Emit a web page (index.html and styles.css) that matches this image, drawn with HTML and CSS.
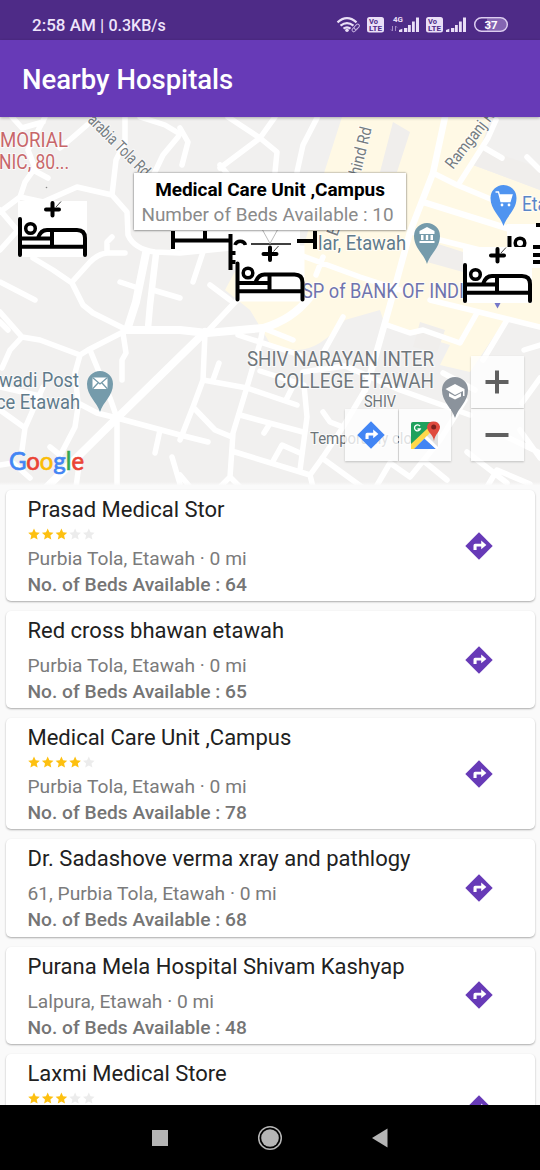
FILE: index.html
```html
<!DOCTYPE html>
<html lang="en">
<head>
<meta charset="utf-8">
<title>Nearby Hospitals</title>
<link rel="stylesheet" href="styles.css">
</head>
<body>
<svg class="defs" width="0" height="0" aria-hidden="true">
  <defs>
    <g id="bed">
      <path class="bed-back" d="M18 201H87V257H18Z"/>
      <path class="bed-line" d="M20 219V255M20 246.7H85M20 238.5H52M52 230V246M38 238C40 232 43 230 47 230H77Q85 230 85 238V255"/>
      <circle class="bed-head" cx="30.5" cy="228.5" r="4.8"/>
      <path class="bed-line" d="M46 209.5H59M52.5 203V215.5"/>
      <path class="bed-tick" d="M61 201.5L56 207"/>
    </g>
    <path id="pin" d="M0 29C-3 19-13 13-13 1A13 13 0 0 1 13 1C13 13 3 19 0 29Z"/>
    <path id="star" d="M6 .4 7.7 4.3 11.8 4.7 8.7 7.4 9.6 11.6 6 9.4 2.4 11.6 3.3 7.4 .2 4.7 4.3 4.3Z"/>
    <g id="directions">
      <path d="M14 .3 27.7 14 14 27.700.3 14Z"/>
      <path class="arrow" d="M8.5 18V13.400Q8.5 11.700 10.200 11.700H16.200V8.600L21.400 13 16.200 17.200V14.600H11.600V18Z"/>
    </g>
  </defs>
</svg>

<header class="status">
  <span class="clock">2:58 AM <span class="thin">|</span> <span class="rate">0.3KB/s</span></span>
  <svg class="status-icons" width="174" height="20" viewBox="336 15 174 20">
    <g class="wifi"><path d="M337.5 22.3Q347 14 356.5 22.3M340.5 25.6Q347 20.5 353.5 25.6M343.5 28.7Q347 26 350.5 28.7"/></g>
    <circle class="fill" cx="347" cy="30.3" r="1.8"/>
    <g class="link"><rect x="351.5" y="27.5" width="6" height="3.4" rx="1.7" transform="rotate(-45 354.5 29)"/><rect x="354" y="25" width="6" height="3.4" rx="1.7" transform="rotate(-45 357 27)"/></g>
    <rect class="fill" x="367" y="17" width="17" height="15.5" rx="2.5"/>
    <text class="volte" x="369" y="24">Vo</text><text class="volte" x="369" y="31.3" textLength="13" lengthAdjust="spacingAndGlyphs">LTE</text>
    <text class="net" x="393" y="22" textLength="10" lengthAdjust="spacingAndGlyphs">4G</text>
    <path class="arrows" d="M392.5 26V31M391 29.5 392.5 31M395.5 31V26M397 27.5 395.5 26"/>
    <path class="fill" d="M399 32V30L402.3 28.8V32ZM404 28H407.3V32H404ZM408 25H410.8V32H408ZM412 21.5H414.8V32H412ZM416 17.5H419V32H416Z"/>
    <rect class="fill" x="426" y="17" width="17" height="15.5" rx="2.5"/>
    <text class="volte" x="428" y="24">Vo</text><text class="volte" x="428" y="31.3" textLength="13" lengthAdjust="spacingAndGlyphs">LTE</text>
    <path class="fill" d="M446 32V30L449.3 28.8V32ZM451 28H454.3V32H451ZM455 25H457.8V32H455ZM459 21.5H461.8V32H459ZM463 17.5H466V32H463Z"/>
    <path class="charge" d="M487 18.5H501A6 6 0 0 1 501 30.5H487Z"/>
    <rect class="battery" x="474.7" y="17.7" width="32.6" height="13.6" rx="6.8"/>
    <text class="percent" x="484.5" y="28.7">37</text>
  </svg>
</header>

<div class="appbar"><h1>Nearby Hospitals</h1></div>

<main class="content">
<section class="map">
  <svg class="map-canvas" width="540" height="370" viewBox="0 117 540 370">
    <rect class="land" y="117" width="540" height="370"/>
    <path class="zone" d="M342 117H490L485 135 473 165 540 190V325L505 320 470 372 440 365 450 345 385 325 380 310 345 320Q320 350 297 350L272 347 262 330 250 310 225 290 240 262 300 260 325 170Z"/>
    <path class="block" d="M393 122 410 132 397 172 380 172ZM432 242 463 252V272L427 262ZM420 322 445 330 437 353 413 347ZM482 148 540 168V190L473 165Z"/>
    <g class="roads">
      <path d="M45 117 28 150 35 168 25 182 20 197M12 117 22 128 43 122M60 148 72 138 87 125M33 170 48 178M125 117V142L116 160 112 195M180 134 165 125 140 117M178 137 163 155 152 178M0 212 20 197 43 202 77 187 112 195 127 212 128 235Q134 249 155 252L180 253 230 248M0 250 18 230M0 210 17 230"/>
      <path d="M33 258 53 270 72 283 83 305 93 313 127 330M72 282 90 262Q98 254 107 253H125M107 252V242L112 237M0 282 35 300M120 282 135 287M153 290 180 298M203 252 193 282M210 285 230 300"/>
      <path d="M0 312 22 337 40 340 80 355 88 350 127 330M22 337 10 350 2 368M80 355 75 373 78 403 97 413 117 418M90 350 97 367 110 398 117 418M123 333 126 353 122 360V380M0 322 8 330M117 418 180 435 208 442M117 418V487M160 430 155 453M172 457 180 484M78 407 75 427 62 452M50 447 60 455M0 410 25 428 22 450M43 387 25 428M0 387 40 396M0 465 13 463 30 478M79 465 76 487"/>
      <path d="M207 332 237 300M205 333 203 380 193 407 180 440M263 328 260 343 247 387 233 433 230 477 240 487M230 477 220 487M180 475 190 487M203 380 247 388 297 405M213 380 219 363M263 328 293 340M238 335 300 355M193 407 215 430 232 437M240 415 303 432M269 425 264 433M260 371 304 385 307 417 300 470M286 400 292 388M235 452 310 475 313 487M272 463 282 445 300 453M310 475 323 457 343 427 365 390M322 458 362 487M323 412 330 422 343 427M343 317 323 353M303 372 345 366 400 390 470 415"/>
      <path d="M228 117 260 138 277 152 275 172M275 117 260 138 220 168M220 165 229 176M317 118 303 145 297 172M180 128 188 142 182 165M300 255 360 277 400 290M323 257 316 275"/>
      <path d="M433 173 457 185 500 203M460 182 488 138 496 120M483 147 502 158M527 157 540 170M412 232 440 240 480 250M387 325 410 333 423 330 460 343 477 313M430 300 540 327M507 320 483 360M443 373 475 390M467 452 507 483M376 487 390 463 410 477 440 440 465 400M425 462 447 480M487 487 497 470 530 484M520 430 540 458M522 403 540 378M507 437 540 453M524 350 540 345"/>
      <path class="main" d="M180 330 207 333 263 328Q292 320 310 297M127 330H180M205 332 117 418 47 487M146 253 136 302 127 330"/>
      <path class="avenue" d="M156 254 150 305 148 328M445 117 433 173 410 232 390 305 373 365 365 390M423 202 503 227 540 238"/>
    </g>

    <text class="road-name" transform="translate(87 121) rotate(45)" textLength="80" lengthAdjust="spacingAndGlyphs">arabia Tola Rd</text>
    <text class="road-name" transform="translate(360 176) rotate(-76)" textLength="49" lengthAdjust="spacingAndGlyphs">hind Rd</text>
    <text class="road-name" transform="translate(453 170) rotate(-52)" textLength="76" lengthAdjust="spacingAndGlyphs">Ramganj Rd</text>
    <text class="road-name" transform="translate(337 237) rotate(-70)">E</text>
    <g class="clinic"><text x="0" y="147" textLength="68" lengthAdjust="spacingAndGlyphs">MORIAL</text><text x="-1" y="169" textLength="70" lengthAdjust="spacingAndGlyphs">NIC, 80...</text></g>
    <g class="place"><text x="-1" y="387" textLength="80" lengthAdjust="spacingAndGlyphs">wadi Post</text><text x="-4" y="409" textLength="84" lengthAdjust="spacingAndGlyphs">ce Etawah</text></g>
    <text class="place" x="318" y="250" textLength="88" lengthAdjust="spacingAndGlyphs">lar, Etawah</text>
    <text class="bank" x="302" y="298" textLength="162" lengthAdjust="spacingAndGlyphs">SP of BANK OF INDI</text>
    <text class="shop" x="522" y="211" textLength="25" lengthAdjust="spacingAndGlyphs">Eta</text>
    <g class="school"><text x="247" y="366" textLength="187" lengthAdjust="spacingAndGlyphs">SHIV NARAYAN INTER</text><text x="274" y="388" textLength="160" lengthAdjust="spacingAndGlyphs">COLLEGE ETAWAH</text></g>
    <text class="note" x="364" y="407" textLength="32" lengthAdjust="spacingAndGlyphs">SHIV</text>
    <text class="note" x="310" y="444" textLength="126" lengthAdjust="spacingAndGlyphs">Temporarily closed</text>

    <g class="pin teal"><use href="#pin" x="100" y="383"/><rect class="glyph" x="92.5" y="377.5" width="15" height="11.5"/><path class="glyph-line" d="M92.5 377.5 100 384 107.5 377.5M92.5 389 98 383M107.5 389 102 383"/></g>
    <g class="pin teal"><use href="#pin" x="427" y="235"/><path class="glyph" d="M419.5 234V231L427 227 434.5 231V234ZM421 235H423.5V240H421ZM425.8 235H428.2V240H425.8ZM430.5 235H433V240H430.5ZM419.5 241H434.5V243H419.5Z"/></g>
    <g class="pin blue"><use href="#pin" x="503.5" y="197"/><path class="cart" d="M495.5 192H498.5L501 201.5H510L512 195H499.5"/><path class="glyph" d="M499.5 195H512L510 201H501Z"/><circle class="glyph" cx="502" cy="205" r="1.4"/><circle class="glyph" cx="509" cy="205" r="1.4"/></g>
    <g class="pin gray"><use href="#pin" x="455" y="389"/><path class="glyph" d="M445.5 389 455 384 464.5 389V396H463V391L455 395ZM449 393V396.5L455 399.5 461 396.5V393L455 396.2Z"/></g>
    <path class="bank-dot" d="M494.5 303H500.5L497.5 308.5Z"/>

    <path class="bed-back" d="M171 228H230V250H171ZM230 230H300V271H235ZM507 224H540V268H507Z"/>
    <path class="bed-line square" d="M173 231V249M173 240.5H231M205 231V240M230.5 234V270M232 262H236M232 253H236M297 241H316M315 231V249"/>
    <path class="bed-head" d="M235 245A5.5 5.5 0 0 1 245.5 245"/>
    <path class="bed-tick strong" d="M251 244H291"/>
    <path class="bed-line square" d="M509.5 236V247M536 225H540M533 247H540M533 255H540M533 262H540"/>
    <circle class="bed-head" cx="520" cy="243" r="4.8"/>
    <use href="#bed"/>
    <use href="#bed" x="217.5" y="44.5"/>
    <use href="#bed" x="445" y="46"/>
    <circle class="speck" cx="46.5" cy="187.5" r=".8"/>

    <text class="google" x="9" y="470" textLength="75" lengthAdjust="spacingAndGlyphs"><tspan class="g-blue">G</tspan><tspan class="g-red">o</tspan><tspan class="g-yellow">o</tspan><tspan class="g-blue">g</tspan><tspan class="g-green">l</tspan><tspan class="g-red">e</tspan></text>
    <path class="callout-tip" d="M262 229 270 243.5 278 229Z"/>
  </svg>

  <div class="callout">
    <strong>Medical Care Unit ,Campus</strong>
    <span>Number of Beds Available : 10</span>
  </div>

  <div class="map-tools">
    <span class="tool"><svg class="dir-blue" width="28" height="28" viewBox="0 0 28 28"><use href="#directions"/></svg></span>
    <span class="tool"><svg width="30" height="30" viewBox="0 0 30 30">
      <rect x="1" y="2" width="27" height="27" rx="2" fill="#e0e0e0"/>
      <path d="M3 2H22L20 10 1 29V4Q1 2 3 2Z" fill="#1fa15d"/>
      <path d="M1 24 19 7 23 10 4 29H1Z" fill="#ffd84b"/>
      <path d="M4 29 14.5 18.5 26 29Z" fill="#4285f4"/>
      <path d="M17 16 28 27V29H26L14.5 18.5Z" fill="#fff"/>
      <path d="M24 21C23 14 17 12 17 6.5A6.7 6.7 0 0 1 30 6.5C30 12 25 14 24 21Z" fill="#df4a3e"/>
      <circle cx="23.7" cy="7" r="2.5" fill="#7c221e"/>
      <path d="M10 6.2A3 3 0 1 0 10.3 9H7.5" fill="none" stroke="#fff" stroke-width="1.3"/>
    </svg></span>
  </div>

  <div class="zoom">
    <span class="zoom-btn"><svg width="24" height="24" viewBox="0 0 24 24"><path d="M.5 12H23.5M12 .5V23.5"/></svg></span>
    <span class="zoom-btn"><svg width="24" height="24" viewBox="0 0 24 24"><path d="M.5 12H23.5"/></svg></span>
  </div>
</section>

<section class="list">
  <article class="card">
    <div class="info"><h2>Prasad Medical Stor</h2>
      <svg class="stars" width="70" height="23" viewBox="0 0 70 23"><g class="on"><use href="#star" x="1" y="5"/><use href="#star" x="14.7" y="5"/><use href="#star" x="28.4" y="5"/></g><g class="off"><use href="#star" x="42.1" y="5"/><use href="#star" x="55.8" y="5"/></g></svg>
      <p>Purbia Tola, Etawah · 0 mi</p><p class="beds">No. of Beds Available : 64</p></div>
    <svg class="go" width="28" height="28" viewBox="0 0 28 28"><use href="#directions"/></svg>
  </article>
  <article class="card plain">
    <div class="info"><h2>Red cross bhawan etawah</h2><p>Purbia Tola, Etawah · 0 mi</p><p class="beds">No. of Beds Available : 65</p></div>
    <svg class="go" width="28" height="28" viewBox="0 0 28 28"><use href="#directions"/></svg>
  </article>
  <article class="card">
    <div class="info"><h2>Medical Care Unit ,Campus</h2>
      <svg class="stars" width="70" height="23" viewBox="0 0 70 23"><g class="on"><use href="#star" x="1" y="5"/><use href="#star" x="14.7" y="5"/><use href="#star" x="28.4" y="5"/><use href="#star" x="42.1" y="5"/></g><g class="off"><use href="#star" x="55.8" y="5"/></g></svg>
      <p>Purbia Tola, Etawah · 0 mi</p><p class="beds">No. of Beds Available : 78</p></div>
    <svg class="go" width="28" height="28" viewBox="0 0 28 28"><use href="#directions"/></svg>
  </article>
  <article class="card plain">
    <div class="info"><h2>Dr. Sadashove verma xray and pathlogy</h2><p>61, Purbia Tola, Etawah · 0 mi</p><p class="beds">No. of Beds Available : 68</p></div>
    <svg class="go" width="28" height="28" viewBox="0 0 28 28"><use href="#directions"/></svg>
  </article>
  <article class="card plain">
    <div class="info"><h2>Purana Mela Hospital Shivam Kashyap</h2><p>Lalpura, Etawah · 0 mi</p><p class="beds">No. of Beds Available : 48</p></div>
    <svg class="go" width="28" height="28" viewBox="0 0 28 28"><use href="#directions"/></svg>
  </article>
  <article class="card">
    <div class="info"><h2>Laxmi Medical Store</h2>
      <svg class="stars" width="70" height="23" viewBox="0 0 70 23"><g class="on"><use href="#star" x="1" y="5"/><use href="#star" x="14.7" y="5"/><use href="#star" x="28.4" y="5"/></g><g class="off"><use href="#star" x="42.1" y="5"/><use href="#star" x="55.8" y="5"/></g></svg>
    </div>
    <svg class="go" width="28" height="28" viewBox="0 0 28 28"><use href="#directions"/></svg>
  </article>
</section>
</main>

<nav class="navbar">
  <svg width="26" height="26" viewBox="0 0 26 26"><path class="key" d="M5 5H21V21H5Z"/></svg>
  <svg width="26" height="26" viewBox="0 0 26 26"><circle class="ring" cx="13" cy="13" r="11.3"/><circle class="key" cx="13" cy="13" r="8.8"/></svg>
  <svg width="26" height="26" viewBox="0 0 26 26"><path class="key" d="M5 13 20.5 3.5V22.5Z"/></svg>
</nav>
</body>
</html>
```
FILE: styles.css
```css
* { box-sizing: border-box; }
body {
  margin: 0;
  width: 540px;
  height: 1170px;
  display: flex;
  flex-direction: column;
  overflow: hidden;
  background: #fafafa;
  font-family: Roboto, sans-serif;
}
svg { display: block; flex: none; }
.defs { position: absolute; }

/* status bar */
.status {
  height: 40px;
  flex: none;
  display: flex;
  justify-content: space-between;
  padding: 15px 30px 0 32px;
  background: #4e2b87;
  color: #efe5fb;
}
.clock { font-size: 17px; line-height: 20px; font-weight: 500; white-space: nowrap; }
.thin { font-weight: 400; }
.rate { font-size: 16px; }
.fill { fill: #eadff7; }
.wifi path { fill: none; stroke: #eadff7; stroke-width: 2.2; }
.link rect { fill: #4e2b87; stroke: #c7b3e2; stroke-width: 1; }
.volte { font-size: 7.5px; font-weight: 700; fill: #4e2b87; }
.net { font-size: 8px; font-weight: 700; fill: #eadff7; }
.arrows { fill: none; stroke: #a58bc8; stroke-width: 1; }
.charge { fill: #8465b2; }
.battery { fill: none; stroke: #dccdf0; stroke-width: 1.5; }
.percent { font-size: 11.5px; font-weight: 700; fill: #fff; }

.appbar {
  height: 77px;
  flex: none;
  display: flex;
  align-items: center;
  padding: 2px 22px 0;
  background: #673ab7;
  position: relative;
  z-index: 1;
  box-shadow: 0 1px 3px rgba(0, 0, 0, .3);
}
h1 { margin: 0; font-size: 27.5px; font-weight: 500; color: #fff; white-space: nowrap; }

.content { flex: 1; min-height: 0; overflow: hidden; display: flex; flex-direction: column; }

/* map */
.map { position: relative; height: 370px; flex: none; }
.map::after {
  content: "";
  position: absolute;
  left: 0; right: 0; bottom: 0;
  height: 5px;
  background: linear-gradient(rgba(250, 250, 250, 0), #fafafa 70%);
}
.land { fill: #f1f0ef; }
.zone { fill: #fff9e5; }
.block { fill: #f0eeec; }
.roads path { fill: none; stroke: #fff; stroke-width: 5.5; stroke-linejoin: round; stroke-linecap: round; }
.roads .main { stroke-width: 8; }
.roads .avenue { stroke-width: 6.5; }
.map text { stroke: #fff; stroke-width: 2px; stroke-opacity: .7; paint-order: stroke; }
.road-name { font-size: 16.5px; fill: #757c81; }
.clinic { font-size: 20px; fill: #c8676a; }
.place { font-size: 20px; fill: #607b8b; }
.bank { font-size: 20px; fill: #6f74ae; }
.shop { font-size: 20px; fill: #5a86c8; }
.school { font-size: 20px; fill: #70777c; }
.note { font-size: 16px; fill: #6d7478; }
.teal { fill: #759bab; }
.blue { fill: #4f94f0; }
.gray { fill: #8b939c; }
.glyph { fill: #fff; }
.teal .glyph-line { fill: none; stroke: #759bab; stroke-width: 1.3; }
.cart { fill: none; stroke: #fff; stroke-width: 1.3; }
.bank-dot { fill: #7577c9; }
.bed-back { fill: #fff; }
.bed-line { fill: none; stroke: #000; stroke-width: 4; stroke-linecap: round; }
.bed-line.square { stroke-linecap: butt; }
.bed-head { fill: none; stroke: #000; stroke-width: 3.5; }
.bed-tick { stroke: #444; stroke-width: 1; fill: none; }
.bed-tick.strong { stroke: #000; stroke-width: 1.5; }
.speck { fill: #888; }
.callout-tip { fill: #fff; stroke: #bbb; stroke-width: 1; }
.map .google { font-family: Lato, sans-serif; font-size: 25px; font-weight: 400; stroke-width: .7px; stroke-opacity: 1; }
.g-blue { fill: #4285f4; stroke: #4285f4; }
.g-red { fill: #ea4335; stroke: #ea4335; }
.g-yellow { fill: #fbbc05; stroke: #fbbc05; }
.g-green { fill: #34a853; stroke: #34a853; }

.callout {
  position: absolute;
  left: 134px; top: 56px;
  width: 272px; height: 57px;
  display: flex;
  flex-direction: column;
  align-items: center;
  padding-top: 4px;
  background: #fff;
  box-shadow: 0 0 2px rgba(0, 0, 0, .5), 0 1px 2px rgba(0, 0, 0, .2);
  white-space: nowrap;
}
.callout strong { font-size: 19px; line-height: 25px; font-weight: 700; letter-spacing: -.05px; }
.callout span { font-size: 18.9px; line-height: 26px; color: #8a8a8a; padding-right: 5px; }

.map-tools, .zoom { position: absolute; display: flex; gap: 1px; }
.map-tools { left: 345px; top: 292px; }
.zoom { left: 471px; top: 239px; flex-direction: column; }
.tool, .zoom-btn {
  width: 52.5px; height: 52px;
  display: flex;
  align-items: center;
  justify-content: center;
  background: rgba(255, 255, 255, .78);
  box-shadow: 0 1px 2px rgba(0, 0, 0, .2);
}
.zoom-btn path { fill: none; stroke: #606060; stroke-width: 4; }
.dir-blue { fill: #4285f4; }
.arrow { fill: #fff; }

/* results */
.list { display: flex; flex-direction: column; gap: 10px; padding: 3px 5.5px 0; }
.card {
  height: 111px;
  flex: none;
  display: flex;
  align-items: center;
  justify-content: space-between;
  padding: 0 41.3px 0 22px;
  background: #fff;
  border-radius: 5px;
  box-shadow: 0 1px 2px rgba(0, 0, 0, .32);
}
.card.plain { height: 97.3px; }
.info { align-self: flex-start; padding-top: 6px; white-space: nowrap; }
h2 { margin: 0; font-size: 22px; line-height: 27px; font-weight: 400; color: #212121; }
.plain h2 { margin-bottom: 9px; }
.stars { margin-left: -.8px; }
.info p { margin: 0; font-size: 19.2px; line-height: 26px; color: #7b7b7b; }
.info .beds { font-weight: 500; color: #757575; }
.on { fill: #fdc010; }
.off { fill: #ececec; }
.go { fill: #673ab7; }

.navbar {
  height: 65px;
  flex: none;
  display: flex;
  justify-content: center;
  align-items: center;
  gap: 84px;
  background: #000;
}
.key { fill: #b5b5b5; }
.ring { fill: none; stroke: #b5b5b5; stroke-width: 1.5; }
```
